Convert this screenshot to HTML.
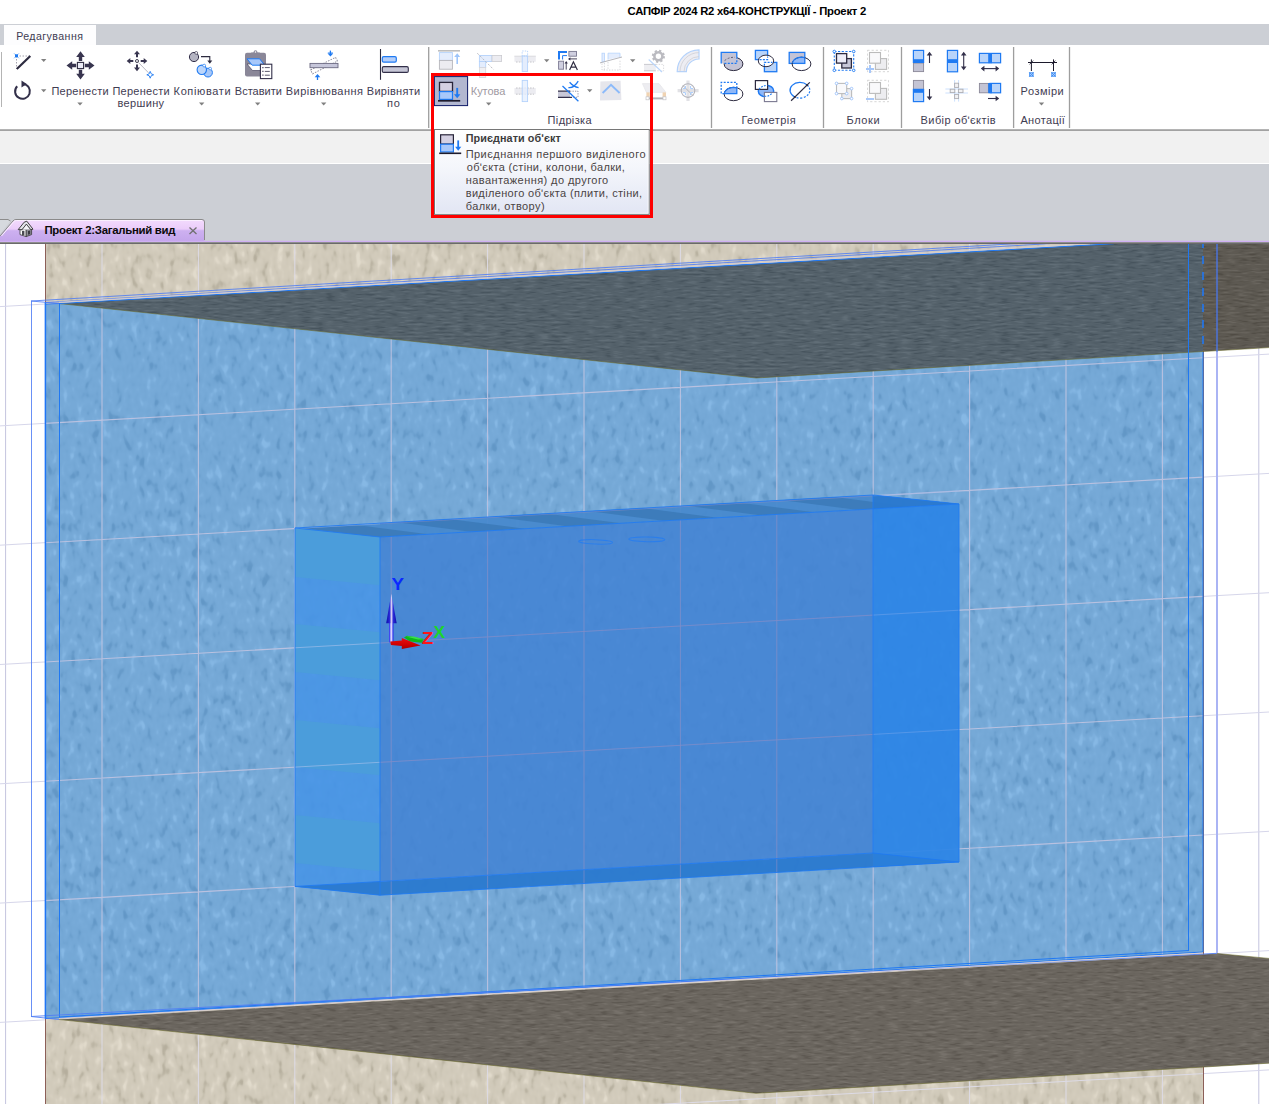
<!DOCTYPE html>
<html lang="uk">
<head>
<meta charset="utf-8">
<title>САПФІР 2024 R2 x64-КОНСТРУКЦІЇ - Проект 2</title>
<style>
html,body{margin:0;padding:0;}
body{width:1269px;height:1104px;overflow:hidden;position:relative;background:#fff;font-family:"Liberation Sans",sans-serif;font-size:11px;color:#3c3a4e;}
.abs{position:absolute;}
.t{position:absolute;white-space:nowrap;line-height:13px;font-size:11px;color:#3d3b50;}
.c{text-align:center;}
.b{font-weight:bold;}
.dd{position:absolute;width:0;height:0;border-left:3px solid transparent;border-right:3px solid transparent;border-top:3px solid #777;}
.sep{position:absolute;width:1px;background:#9c9c9c;}
svg{position:absolute;overflow:visible;}
</style>
</head>
<body>
<!-- title bar -->
<div class="abs" style="left:0;top:0;width:1269px;height:24px;background:#fff;"></div>
<!-- ribbon tab strip -->
<div class="abs" style="left:0;top:24px;width:1269px;height:21px;background:#cccfd5;"></div>
<div class="abs" style="left:4px;top:25px;width:92px;height:20px;background:#fdfdfe;"></div>
<!-- ribbon body -->
<div class="abs" style="left:0;top:45px;width:1269px;height:84px;background:#fff;"></div>
<div class="abs" style="left:0;top:129px;width:1269px;height:1px;background:#b4b4b4;"></div>
<div class="abs" style="left:0;top:130px;width:1269px;height:1px;background:#a2a2a2;"></div>
<div class="abs" style="left:0;top:131px;width:1269px;height:32px;background:#f1f1f1;"></div>
<div class="abs" style="left:0;top:163px;width:1269px;height:1px;background:#fff;"></div>
<div class="abs" style="left:0;top:164px;width:1269px;height:80px;background:#cccfd5;"></div>
<!-- document tab -->
<svg style="left:0;top:216px" width="1269" height="28" viewBox="0 216 1269 28">
<defs>
<linearGradient id="gTab" x1="0" y1="0" x2="0" y2="1">
<stop offset="0" stop-color="#f3dbfd"/><stop offset="0.42" stop-color="#ebcdfa"/><stop offset="0.5" stop-color="#cdb0f0"/><stop offset="1" stop-color="#c3a5eb"/>
</linearGradient>
</defs>
<!-- hidden previous tab stub -->
<path d="M0 219.5 H8 L10.5 221 L0 234 Z" fill="#d6d9de"/>
<path d="M0 219.5 H8 L10.5 221" stroke="#8c8c8c" stroke-width="1" fill="none"/>
<!-- active tab -->
<path d="M0 236 L13 221 Q14 219.5 16 219.5 H202 Q204.5 219.5 204.5 222 V242 H0 Z" fill="url(#gTab)"/>
<path d="M0 236 L13 221 Q14 219.5 16 219.5 H202 Q204.5 219.5 204.5 222 V240" stroke="#8a8a8a" stroke-width="1" fill="none"/>
<path d="M1.5 236 L14 221.5 Q15 220.5 16.5 220.5 H202" stroke="#fbf0ff" stroke-width="1" fill="none"/>
<rect x="0" y="240.8" width="1269" height="1.3" fill="#d0b0f4"/>
<rect x="0" y="242" width="1269" height="1" fill="#8e8e8e"/><rect x="0" y="243" width="1269" height="1" fill="#6a6a6a"/>
<!-- house icon -->
<g stroke-linejoin="round">
<path d="M20 229.4 V234.6 L26.2 236.6 V229.4 Z" fill="#fbfbfd" stroke="#3a3a3a" stroke-width="0.8"/>
<path d="M26.2 229.4 V236.6 L31.6 234.6 V229 Z" fill="#8e8e96" stroke="#3a3a3a" stroke-width="0.8"/>
<path d="M18.2 229.6 L24.2 222.2 L26.8 221.2 L33 229.2 L30.6 229.6 L26.4 224.2 L22 229.8 Z" fill="#e4e4ea" stroke="#2e2e2e" stroke-width="0.9"/>
<path d="M22 229.8 L26.4 224.2 L30.6 229.6" fill="#f4f4f8" stroke="#2e2e2e" stroke-width="0.7"/>
<rect x="22" y="230.8" width="2.4" height="4.4" fill="#4a4a52"/>
<path d="M28 231 l2.2 -0.4 v3.4 l-2.2 0.7 z" fill="#3a3a42"/>
</g>
<!-- close x -->
<path d="M189.5 227.5 L196.5 234 M196.5 227.5 L189.5 234" stroke="#707070" stroke-width="1.3" fill="none"/>
</svg>
<svg id="vp" style="left:0;top:244px;overflow:hidden" width="1269" height="860" viewBox="0 244 1269 860">
<defs>
<filter id="fWall" x="0" y="0" width="100%" height="100%" color-interpolation-filters="sRGB"><feTurbulence type="fractalNoise" baseFrequency="0.13 0.075" numOctaves="2" seed="7"/><feColorMatrix type="matrix" values="1 0 0 0 0  1 0 0 0 0  1 0 0 0 0  0 0 0 0 1"/><feComponentTransfer><feFuncR type="table" tableValues="0.386 0.386 0.386 0.386 0.390 0.403 0.424 0.443 0.454 0.459 0.462 0.465 0.469 0.477 0.494 0.513 0.526 0.526 0.526 0.526 0.526"/><feFuncG type="table" tableValues="0.593 0.593 0.593 0.593 0.597 0.608 0.628 0.646 0.655 0.660 0.663 0.665 0.669 0.677 0.693 0.710 0.722 0.722 0.722 0.722 0.722"/><feFuncB type="table" tableValues="0.778 0.778 0.778 0.778 0.782 0.792 0.810 0.827 0.836 0.840 0.843 0.845 0.849 0.856 0.870 0.886 0.897 0.897 0.897 0.897 0.897"/></feComponentTransfer></filter>
<filter id="fBeige" x="0" y="0" width="100%" height="100%" color-interpolation-filters="sRGB"><feTurbulence type="fractalNoise" baseFrequency="0.13 0.075" numOctaves="2" seed="3"/><feColorMatrix type="matrix" values="1 0 0 0 0  1 0 0 0 0  1 0 0 0 0  0 0 0 0 1"/><feComponentTransfer><feFuncR type="table" tableValues="0.711 0.711 0.711 0.711 0.720 0.741 0.771 0.796 0.810 0.818 0.822 0.825 0.830 0.841 0.856 0.873 0.886 0.886 0.886 0.886 0.886"/><feFuncG type="table" tableValues="0.684 0.684 0.684 0.684 0.693 0.714 0.744 0.770 0.783 0.791 0.795 0.798 0.803 0.814 0.829 0.846 0.859 0.859 0.859 0.859 0.859"/><feFuncB type="table" tableValues="0.617 0.617 0.617 0.617 0.626 0.648 0.679 0.706 0.721 0.729 0.733 0.737 0.742 0.753 0.769 0.787 0.800 0.800 0.800 0.800 0.800"/></feComponentTransfer></filter>
<filter id="fSlate" x="0" y="0" width="100%" height="100%" color-interpolation-filters="sRGB"><feTurbulence type="fractalNoise" baseFrequency="0.08 0.5" numOctaves="2" seed="11"/><feColorMatrix type="matrix" values="1 0 0 0 0  1 0 0 0 0  1 0 0 0 0  0 0 0 0 1"/><feComponentTransfer><feFuncR type="table" tableValues="0.278 0.278 0.278 0.278 0.278 0.283 0.295 0.311 0.322 0.329 0.333 0.337 0.344 0.355 0.367 0.377 0.383 0.383 0.383 0.383 0.383"/><feFuncG type="table" tableValues="0.329 0.329 0.329 0.329 0.329 0.334 0.346 0.362 0.373 0.380 0.384 0.388 0.395 0.406 0.418 0.428 0.434 0.434 0.434 0.434 0.434"/><feFuncB type="table" tableValues="0.365 0.365 0.365 0.365 0.365 0.370 0.382 0.398 0.409 0.416 0.420 0.424 0.431 0.442 0.454 0.464 0.470 0.470 0.470 0.470 0.470"/></feComponentTransfer></filter>
<filter id="fBrownT" x="0" y="0" width="100%" height="100%" color-interpolation-filters="sRGB"><feTurbulence type="fractalNoise" baseFrequency="0.08 0.5" numOctaves="2" seed="5"/><feColorMatrix type="matrix" values="1 0 0 0 0  1 0 0 0 0  1 0 0 0 0  0 0 0 0 1"/><feComponentTransfer><feFuncR type="table" tableValues="0.314 0.314 0.314 0.314 0.314 0.319 0.331 0.347 0.358 0.365 0.369 0.373 0.380 0.391 0.403 0.413 0.419 0.419 0.419 0.419 0.419"/><feFuncG type="table" tableValues="0.298 0.298 0.298 0.298 0.298 0.303 0.315 0.331 0.342 0.349 0.353 0.357 0.364 0.375 0.387 0.397 0.403 0.403 0.403 0.403 0.403"/><feFuncB type="table" tableValues="0.270 0.270 0.270 0.270 0.270 0.275 0.287 0.303 0.314 0.321 0.325 0.329 0.336 0.347 0.359 0.369 0.375 0.375 0.375 0.375 0.375"/></feComponentTransfer></filter>
<filter id="fBrown" x="0" y="0" width="100%" height="100%" color-interpolation-filters="sRGB"><feTurbulence type="fractalNoise" baseFrequency="0.08 0.5" numOctaves="2" seed="9"/><feColorMatrix type="matrix" values="1 0 0 0 0  1 0 0 0 0  1 0 0 0 0  0 0 0 0 1"/><feComponentTransfer><feFuncR type="table" tableValues="0.365 0.365 0.365 0.365 0.365 0.370 0.382 0.398 0.409 0.416 0.420 0.424 0.431 0.442 0.454 0.464 0.470 0.470 0.470 0.470 0.470"/><feFuncG type="table" tableValues="0.345 0.345 0.345 0.345 0.345 0.350 0.362 0.378 0.389 0.396 0.400 0.404 0.411 0.422 0.434 0.444 0.450 0.450 0.450 0.450 0.450"/><feFuncB type="table" tableValues="0.318 0.318 0.318 0.318 0.318 0.323 0.335 0.351 0.362 0.369 0.373 0.377 0.384 0.395 0.407 0.417 0.423 0.423 0.423 0.423 0.423"/></feComponentTransfer></filter>
<clipPath id="cWall"><polygon points="45,304.6 59,303.5 1114,243.7 1118,243 1203,243 1203,952 45,1018.6"/></clipPath>
<clipPath id="cDarkL"><polygon points="59,303.5 1114,243.7 1118,243 1203,243 1203,351.5 756,378"/></clipPath>
<clipPath id="cDarkR"><polygon points="1203,243 1269,243 1269,347.6 1203,351.5"/></clipPath>
<clipPath id="cBrown"><polygon points="59,1019.5 1217,953.5 1269,958.4 1269,1063.2 756,1093.3"/></clipPath>
</defs>
<rect x="0" y="244" width="1269" height="860" fill="#fff"/>
<path d="M5.6 244 V1104 M102 244 V1104 M198.4 244 V1104 M294.8 244 V1104 M391.2 244 V1104 M487.6 244 V1104 M584 244 V1104 M680.4 244 V1104 M776.8 244 V1104 M873.2 244 V1104 M969.6 244 V1104 M1066 244 V1104 M1162.4 244 V1104 M1258.8 244 V1104" stroke="#c4c4de" stroke-width="1" fill="none"/>
<path d="M0 187.3 L1269 115.5 M0 306.6 L1269 234.8 M0 425.9 L1269 354.1 M0 545.2 L1269 473.4 M0 664.5 L1269 592.7 M0 783.8 L1269 712 M0 903.1 L1269 831.3 M0 1022.4 L1269 950.6 M0 1141.7 L1269 1069.9" stroke="#d6d6ea" stroke-width="1" fill="none"/>
<rect x="45" y="244" width="1158" height="860" filter="url(#fBeige)"/>
<path d="M102 244 V1104 M198.4 244 V1104 M294.8 244 V1104 M391.2 244 V1104 M487.6 244 V1104 M584 244 V1104 M680.4 244 V1104 M776.8 244 V1104 M873.2 244 V1104 M969.6 244 V1104 M1066 244 V1104 M1162.4 244 V1104 M45 184.8 L1203 119.2 M45 1139.2 L1203 1073.6" stroke="#dddbe6" stroke-width="1" fill="none" clip-path="none"/>
<path d="M45.5 244 V1104 M1203.5 244 V1104" stroke="#8c5f58" stroke-width="1"/>
<g clip-path="url(#cWall)"><rect x="45" y="244" width="1158" height="780" filter="url(#fWall)"/>
<path d="M102 244 V1020 M198.4 244 V1020 M294.8 244 V1020 M391.2 244 V1020 M487.6 244 V1020 M584 244 V1020 M680.4 244 V1020 M776.8 244 V1020 M873.2 244 V1020 M969.6 244 V1020 M1066 244 V1020 M1162.4 244 V1020 M45 304.1 L1203 238.5 M45 423.4 L1203 357.8 M45 542.7 L1203 477.1 M45 662 L1203 596.4 M45 781.3 L1203 715.7 M45 900.6 L1203 835 M45 1019.9 L1203 954.3" stroke="#b9c1e0" stroke-width="1.1" fill="none"/>
</g>
<g clip-path="url(#cDarkL)"><rect x="45" y="244" width="1160" height="140" filter="url(#fSlate)"/></g>
<g clip-path="url(#cDarkR)"><rect x="1200" y="244" width="70" height="140" filter="url(#fBrownT)"/></g>
<g clip-path="url(#cBrown)"><rect x="45" y="945" width="1225" height="150" filter="url(#fBrown)"/></g>
<path d="M59 303.5 L756 378 L1269 347.6" stroke="#6a6a2a" stroke-width="0.8" fill="none" opacity="0.7"/>
<path d="M59 1019.5 L756 1093.3 L1269 1063.2 M1217 953.5 L1269 958.4" stroke="#6a6a2a" stroke-width="0.8" fill="none" opacity="0.7"/>
<clipPath id="cSide"><polygon points="295,528 380,537 380,895.2 295,886.4"/></clipPath>
<g clip-path="url(#cSide)">
<rect x="295" y="520" width="86" height="380" fill="#4794e6" fill-opacity="0.88"/>
<polygon points="295,528 380,536.3 380,585.3 295,577" fill="#4b9dda" fill-opacity="0.95"/>
<polygon points="295,624 380,632.3 380,680.3 295,672" fill="#4b9dda" fill-opacity="0.95"/>
<polygon points="295,720 380,728.3 380,775.3 295,767" fill="#4b9dda" fill-opacity="0.95"/>
<polygon points="295,815 380,823.3 380,871.3 295,863" fill="#4b9dda" fill-opacity="0.95"/>
</g>
<polygon points="295,528 873,495 959,504 380,537" fill="#4789cd" fill-opacity="0.94"/>
<clipPath id="cTop"><polygon points="295,528 873,495 959,504 380,537"/></clipPath>
<g clip-path="url(#cTop)" fill="#3c7bb9" fill-opacity="0.95">
<polygon points="198.6,532.5 252.6,529.4 337.6,540.4 283.6,543.5"/>
<polygon points="295,527 349,523.9 434,534.9 380,538"/>
<polygon points="391.4,521.5 445.4,518.4 530.4,529.4 476.4,532.5"/>
<polygon points="487.8,516 541.8,512.9 626.8,523.9 572.8,527"/>
<polygon points="584.2,510.5 638.2,507.4 723.2,518.4 669.2,521.5"/>
<polygon points="680.6,505 734.6,501.9 819.6,512.9 765.6,516"/>
<polygon points="777,499.5 831,496.4 916,507.4 862,510.5"/>
<polygon points="873.4,494 927.4,490.9 1012.4,502 958.4,505"/>
<polygon points="969.8,488.5 1023.8,485.4 1108.8,496.5 1054.8,499.5"/>
</g>
<polygon points="873,495 959,504 873,508.9" fill="#2a79cf" fill-opacity="0.95"/>
<polygon points="295,886.4 873,853 959,862 380,895.2" fill="#2a79cf" fill-opacity="0.95"/>
<polygon points="380,537 873,508.9 873,853 380,881.4" fill="#4383d3" fill-opacity="0.87"/>
<polygon points="873,508.9 959,504 959,862 873,867" fill="#2b84e6" fill-opacity="0.92"/>
<polygon points="873,853 959,862 873,867" fill="#2a79cf" fill-opacity="0.5"/>
<path d="M391.2 536.9 V894.1 M487.6 531.3 V888.5 M584 525.8 V883 M680.4 520.3 V877.5 M776.8 514.8 V872 M380 523.7 L873 495.8 M380 643 L873 615.1 M380 762.3 L873 734.4" stroke="#8a8cc4" stroke-width="1" fill="none" opacity="0.6"/>
<path d="M295 528.5 L380 523.7 M295 647.8 L380 643 M295 767.1 L380 762.3" stroke="#b4c4ec" stroke-width="1" fill="none" opacity="0.55"/>
<path d="M873 495.8 L959 490.9 M873 615.1 L959 610.2 M873 734.4 L959 729.5" stroke="#8cb0ec" stroke-width="1" fill="none" opacity="0.35"/>
<path d="M295 528 L873 495 L873 853 L295 886.4 Z M380 537 L959 504 L959 862 L380 895.2 Z M295 528 L380 537 M873 495 L959 504 M873 853 L959 862 M295 886.4 L380 895.2" stroke="#1f7af2" stroke-width="1" fill="none" stroke-opacity="0.85"/>
<ellipse cx="595.6" cy="541.9" rx="17" ry="2.2" transform="rotate(2 595.6 541.9)" stroke="#1f7af5" stroke-width="1" fill="none" opacity="0.7"/>
<ellipse cx="646.8" cy="539.4" rx="18" ry="2.3" transform="rotate(1 646.8 539.4)" stroke="#1f7af5" stroke-width="1" fill="none" opacity="0.7"/>
<path d="M45 304.3 L1114 243.7 M45 1018.6 L1203 952 M59 1017 L1189 950.5 M59.5 303.5 V1018 M1188.5 243 V951 M1203 352 V952" stroke="#1f78f3" stroke-width="1" fill="none"/>
<path d="M31 301 L1027 243 M45 302.6 L1060 243 M31 301 L59 303.5 M31 1016.5 L1217 953.3 M31 1016.5 L59 1019.5 M31.5 301 V1016.5" stroke="#4f7cf4" stroke-width="1" fill="none" opacity="0.85"/>
<path d="M45.4 302.5 V1018.6" stroke="#1f75f5" stroke-width="1.5" fill="none"/>
<path d="M1203 240 V352" stroke="#2177f2" stroke-width="1.6" stroke-dasharray="8 8" fill="none"/>
<path d="M1217 243 V953" stroke="#4a76e8" stroke-width="1.5" fill="none" opacity="0.9"/>
<path d="M1217 352 V953" stroke="#aab4f4" stroke-width="2" fill="none"/>
<path d="M59 302.4 L1090 243.6" stroke="#d4ccd0" stroke-width="1.2" fill="none" opacity="0.9"/>
<path d="M59 1018.4 L1203 953" stroke="#d8cfd8" stroke-width="1" fill="none" opacity="0.95"/>
<g>
<defs>
<linearGradient id="gCone" x1="0" y1="0" x2="1" y2="0"><stop offset="0" stop-color="#0c0ca8"/><stop offset="0.32" stop-color="#2a2ad8"/><stop offset="0.5" stop-color="#d8d0f4"/><stop offset="0.68" stop-color="#2a2ad8"/><stop offset="1" stop-color="#0c0ca8"/></linearGradient>
<linearGradient id="gShaft" x1="0" y1="0" x2="1" y2="0"><stop offset="0" stop-color="#1818f0"/><stop offset="0.5" stop-color="#f0ecff"/><stop offset="1" stop-color="#1818f0"/></linearGradient>
<linearGradient id="gRed" x1="0" y1="0" x2="0" y2="1"><stop offset="0" stop-color="#e81010"/><stop offset="0.6" stop-color="#d00000"/><stop offset="1" stop-color="#a80000"/></linearGradient>
</defs>
<polygon points="404,637.4 407,635.8 423.8,639 421.6,642.8 410,641.6" fill="#0cb81c"/>
<polygon points="406,636.6 414,636.4 423.8,639.2 418,639.6" fill="#38e048"/>
<rect x="389.1" y="622.5" width="4.3" height="20" fill="url(#gShaft)"/>
<polygon points="391.3,593.8 386.2,623.2 396.7,623.2" fill="url(#gCone)"/>
<polygon points="390.2,641.6 401.8,640.6 401.8,638.1 420.6,645.4 401.8,649 401.8,646 391,645" fill="url(#gRed)"/>
<text x="391.6" y="590" font-family="Liberation Sans, sans-serif" font-weight="bold" font-size="16.2" fill="#0a28ff" textLength="12.6" lengthAdjust="spacingAndGlyphs">Y</text>
<text x="421.8" y="643.7" font-family="Liberation Sans, sans-serif" font-weight="bold" font-size="16" fill="#ff1414" textLength="11.6" lengthAdjust="spacingAndGlyphs">Z</text>
<text x="433.6" y="637.7" font-family="Liberation Sans, sans-serif" font-weight="bold" font-size="16" fill="#1cd42c" textLength="11.6" lengthAdjust="spacingAndGlyphs">X</text>
</g>
</svg>
<!-- ribbon icons -->
<svg id="rib" style="left:0;top:45px" width="1269" height="85" viewBox="0 45 1269 85">
<defs>
<marker id="mD" viewBox="0 0 6 6" refX="3" refY="3" markerWidth="6" markerHeight="6" orient="auto"><path d="M0 0 L6 3 L0 6 Z" fill="#33304a"/></marker>
</defs>
<g fill="none" stroke-linecap="butt">
<!-- separators -->
<path d="M1.5 52 V107" stroke="#b4b4b4" stroke-width="1"/>
<path d="M428.7 47 V128 M711.5 47 V128 M823.5 47 V128 M901.5 47 V128 M1013.6 47 V128 M1069.5 47 V128" stroke="#9e9e9e" stroke-width="1.3"/>

<!-- line tool -->
<path d="M16.5 56 H30 M16.5 56 V69" stroke="#8a8898" stroke-width="0.8" stroke-dasharray="1.5 1.5"/>
<path d="M16.8 69 L30.3 56" stroke="#2d2b40" stroke-width="2.2"/>
<rect x="15" y="54.3" width="3" height="3" fill="#1f7af2"/>
<path d="M14 53.3 l5 5 m0 -5 l-5 5" stroke="#1f7af2" stroke-width="0.5"/>
<path d="M41 59 h5.4 l-2.7 3 z" fill="#808080"/>
<!-- rotate tool -->
<path d="M23.2 84 A7.4 7.4 0 1 1 17.2 86.2" stroke="#33304a" stroke-width="2"/>
<path d="M21.5 80.5 L26.8 84 L21.5 87.6 Z" fill="#33304a"/>
<path d="M41 89.2 h5.4 l-2.7 3 z" fill="#808080"/>

<!-- move icon -->
<g fill="#38354f">
<path d="M80.5 51.3 l4.3 5.7 h-2.6 v4 h-3.4 v-4 h-2.6 z"/>
<path d="M80.5 79.5 l4.3 -5.7 h-2.6 v-4 h-3.4 v4 h-2.6 z"/>
<path d="M66.5 65.5 l5.7 -4.3 v2.6 h4 v3.4 h-4 v2.6 z"/>
<path d="M94.5 65.5 l-5.7 -4.3 v2.6 h-4 v3.4 h4 v2.6 z"/>
</g>
<rect x="77.4" y="62.4" width="6.2" height="6.2" fill="#ececf6" stroke="#2d2b40" stroke-width="1.1"/>
<path d="M77.3 102.6 h5.4 l-2.7 3 z" fill="#808080"/>

<!-- move vertex icon -->
<g fill="#38354f">
<path d="M137 50.7 l3 3.6 h-2 v3 h-2 v-3 h-2 z"/>
<path d="M137 71.2 l3 -3.6 h-2 v-3 h-2 v3 h-2 z"/>
<path d="M126.7 61 l3.6 -3 v2 h3 v2 h-3 v2 z"/>
<path d="M147.3 61 l-3.6 -3 v2 h-3 v2 h3 v2 z"/>
</g>
<circle cx="137" cy="61" r="1.5" fill="#fff" stroke="#2d2b40" stroke-width="0.9"/>
<path d="M138.3 62.3 L148.5 72.8" stroke="#8a8898" stroke-width="0.6"/>
<path d="M150.2 71.4 l1 2.4 2.4 1 -2.4 1 -1 2.4 -1 -2.4 -2.4 -1 2.4 -1 z" fill="#fff" stroke="#1f7af2" stroke-width="0.9"/>

<!-- copy icon -->
<circle cx="194" cy="57" r="4.6" fill="#b4b4c2" stroke="#33304a" stroke-width="1"/>
<circle cx="196.2" cy="52.9" r="1.4" fill="#fff" stroke="#33304a" stroke-width="0.7"/>
<path d="M201 56.6 H209.8 V61" stroke="#2d2b40" stroke-width="1.1"/>
<path d="M207.3 60.4 h5 l-2.5 3.4 z" fill="#2d2b40"/>
<circle cx="208" cy="72.6" r="4.4" fill="#a8c8f8" stroke="#1f7af2" stroke-width="1"/>
<circle cx="210.2" cy="68.6" r="1.3" fill="#fff" stroke="#1f7af2" stroke-width="0.7"/>
<circle cx="201.8" cy="69.8" r="4.7" fill="#bcd6fb" stroke="#1f7af2" stroke-width="1.1"/>
<circle cx="204.2" cy="65.6" r="1.4" fill="#fff" stroke="#1f7af2" stroke-width="0.7"/>
<path d="M199 102.6 h5.4 l-2.7 3 z" fill="#808080"/>

<!-- paste icon -->
<rect x="245" y="52.8" width="21" height="23.8" rx="2" fill="#8a8798"/>
<path d="M250.8 55.4 v-2 q0 -1 1 -1 h1.6 q0.3 -2.2 2.1 -2.2 q1.8 0 2.1 2.2 h1.6 q1 0 1 1 v2 z" fill="#8a8798"/>
<circle cx="255.5" cy="52" r="0.8" fill="#fff"/>
<path d="M247 64 h12 l5.5 6.5 h-12 z" fill="#fff" stroke="#4a4760" stroke-width="0.7"/>
<path d="M247 58.8 h12.6 l5.2 6.4 h-12.6 z" fill="#a8c8fa" stroke="#1f7af2" stroke-width="1"/>
<rect x="260.4" y="64.2" width="11.4" height="14.4" fill="#fff" stroke="#33304a" stroke-width="1.1"/>
<path d="M264.8 67.6 h5 M264.8 71.4 h5 M264.8 75.2 h5" stroke="#4a4760" stroke-width="0.9"/>
<path d="M262.3 67.6 h1.2 M262.3 71.4 h1.2 M262.3 75.2 h1.2" stroke="#4a4760" stroke-width="1.2"/>
<path d="M255 102.6 h5.4 l-2.7 3 z" fill="#808080"/>

<!-- align icon -->
<rect x="310" y="63.4" width="28" height="4.3" fill="none" stroke="#8a8898" stroke-width="0.9" stroke-dasharray="1.6 1.2" transform="rotate(-27 324 65.5)"/>
<rect x="310" y="63.4" width="28" height="4.3" fill="#c6c6da" stroke="#6a6880" stroke-width="0.9"/>
<path d="M330.4 50.6 V55" stroke="#1f7af2" stroke-width="1.3"/>
<path d="M327.6 53.4 h5.6 l-2.8 3.2 z" fill="#1f7af2"/>
<path d="M327.8 53 H333" stroke="#1f7af2" stroke-width="0.9"/>
<path d="M317.5 80 V75.6" stroke="#1f7af2" stroke-width="1.3"/>
<path d="M314.7 77.2 h5.6 l-2.8 -3.2 z" fill="#1f7af2"/>
<path d="M321 102.6 h5.4 l-2.7 3 z" fill="#808080"/>

<!-- align-by icon -->
<path d="M380.5 49 V79.8" stroke="#2d2b40" stroke-width="1.1"/>
<rect x="382.3" y="56.6" width="14" height="5.6" rx="1.4" fill="#b4cffa" stroke="#1f7af2" stroke-width="1.2"/>
<rect x="382.3" y="66.6" width="26" height="5.8" rx="1.4" fill="#c6c6d6" stroke="#33304a" stroke-width="1.1"/>
</g>
</svg>
<svg id="rib2" style="left:0;top:45px" width="1269" height="85" viewBox="0 45 1269 85">
<g fill="none">
<!-- ===== Pidrizka row 1 (faded) ===== -->
<g opacity="0.55">
<!-- icon1 -->
<path d="M438 50.8 H460" stroke="#8a8a8a" stroke-width="1.6"/>
<rect x="439.4" y="52.6" width="13" height="7.8" fill="#cfe0fc" stroke="#78aef8" stroke-width="0.9"/>
<rect x="439.4" y="60.4" width="13" height="8.8" fill="#dedee6" stroke="#7a7a84" stroke-width="0.9"/>
<path d="M457.2 64 V55.5" stroke="#4f97f7" stroke-width="1.6"/>
<path d="M454.2 57 l3 -3.8 3 3.8 z" fill="#4f97f7"/>
<!-- icon2 corner -->
<rect x="479.4" y="55.5" width="12.6" height="6" fill="#cfe0fc" stroke="#78aef8" stroke-width="0.9"/>
<rect x="492" y="55.5" width="9.6" height="6" fill="#dedee6" stroke="#a0a0aa" stroke-width="0.8"/>
<rect x="479.4" y="61.5" width="6.3" height="6" fill="#cfe0fc" stroke="#78aef8" stroke-width="0.9"/>
<rect x="479.4" y="67.5" width="6.3" height="10" fill="#e4e4ea" stroke="#b4b4bc" stroke-width="0.8"/>
<path d="M477.3 53.2 L493.7 69.6" stroke="#7a7a84" stroke-width="0.9" stroke-dasharray="2.2 1.6"/>
<!-- icon3 cross -->
<rect x="514.4" y="56.2" width="21.4" height="5.6" fill="#dedee6" stroke="none"/>
<path d="M514.4 56.2 H535.8" stroke="#b0b0b8" stroke-width="0.8"/>
<path d="M516 62 H534" stroke="#8a8a94" stroke-width="0.9" stroke-dasharray="1.6 1.2"/>
<rect x="522.2" y="56" width="5.4" height="15.4" fill="#cfe0fc" stroke="#78aef8" stroke-width="0.9"/>
<rect x="522.2" y="51" width="5.4" height="5" fill="none" stroke="#78aef8" stroke-width="0.9" stroke-dasharray="1.4 1.2"/>
</g>
<path d="M544 59.2 h5.4 l-2.7 3 z" fill="#808080"/>
<!-- icon4 A -->
<path d="M559 59.5 V52 H567" stroke="#1f7af2" stroke-width="2"/>
<path d="M562.6 59.5 V55.6 H567" stroke="#1f7af2" stroke-width="1"/>
<rect x="568.9" y="51.4" width="7.6" height="4.8" fill="#d0d0e0" stroke="#7a7890" stroke-width="0.9"/>
<path d="M577 58.9 H569.5" stroke="#33304a" stroke-width="0.9"/>
<path d="M570.4 57.3 l-2.4 1.6 2.4 1.6 z" fill="#33304a"/>
<rect x="558.6" y="61.2" width="5" height="8" fill="#d0d0e0" stroke="#7a7890" stroke-width="0.9"/>
<path d="M566.2 69.6 V62.4" stroke="#33304a" stroke-width="0.9"/>
<path d="M564.6 63.4 l1.6 -2.4 1.6 2.4 z" fill="#33304a"/>
<path d="M569.6 70 L573.4 61.8 L577.4 70 M571 67.2 H575.8" stroke="#2d2b40" stroke-width="1.2"/>
<!-- icon5 faded -->
<g opacity="0.55">
<rect x="602" y="53.2" width="2.4" height="8.6" fill="#cfe0fc" stroke="#78aef8" stroke-width="0.8"/>
<path d="M608 59.6 V53.2 H620 V57.2" fill="#cfe0fc" stroke="#78aef8" stroke-width="0.8"/>
<path d="M600 62.9 L622 57" stroke="#7a7a84" stroke-width="1"/>
<path d="M602 63.5 V70 H620 V60 M604.4 63 V70 M608 62 V70" stroke="#9a9aa4" stroke-width="0.7" stroke-dasharray="1.4 1.3"/>
</g>
<path d="M630 59.2 h5.4 l-2.7 3 z" fill="#808080"/>
<!-- icon6 gear faded -->
<g opacity="0.5">
<circle cx="658.4" cy="56.3" r="4" stroke="#7a7a84" stroke-width="2.6"/>
<circle cx="658.4" cy="56.3" r="5.6" stroke="#7a7a84" stroke-width="2" stroke-dasharray="2.2 2.2"/>
<rect x="644" y="64.4" width="11.8" height="6.4" fill="#dedee6" stroke="none"/>
<path d="M644 64.4 H655.8 M644 70.8 H655.8" stroke="#8a8a94" stroke-width="0.9"/>
<path d="M656 64.4 H663.6 V70.8 H656" stroke="#9a9aa4" stroke-width="0.7" stroke-dasharray="1.4 1.3"/>
<path d="M648.7 59.5 L662 72" stroke="#78aef8" stroke-width="1.1"/>
</g>
<!-- icon7 arc faded -->
<g opacity="0.55">
<path d="M677.2 71.6 A21.8 21.8 0 0 1 699 49.8 V59 A12.6 12.6 0 0 0 686.4 71.6 Z" fill="#e0e0ea" stroke="#78aef8" stroke-width="1.2"/>
<path d="M680 71.6 A19 19 0 0 1 699 52.6 M684 71.6 A15 15 0 0 1 699 56.6" stroke="#a8a8b4" stroke-width="0.8"/>
</g>

<!-- ===== row 2 ===== -->
<rect x="434.4" y="76.6" width="33.2" height="29" fill="#b2b7d0" stroke="#0e1a68" stroke-width="1"/>
<rect x="439.5" y="82.4" width="13" height="9" fill="#d4d0e2" stroke="#28253a" stroke-width="1.3"/>
<rect x="439.5" y="91.6" width="13" height="7.8" fill="#a8c8fa" stroke="#1f7af2" stroke-width="1.2"/>
<path d="M438 100.8 H460.2" stroke="#1c1a2c" stroke-width="1.7"/>
<path d="M457.2 87.9 V95.4" stroke="#1f7af2" stroke-width="1.9"/>
<path d="M454 94.2 h6.4 l-3.2 4 z" fill="#1f7af2"/>
<path d="M486 102.6 h5.4 l-2.7 3 z" fill="#808080"/>
<!-- cross faded row2 -->
<g opacity="0.55">
<rect x="514.4" y="88" width="21.4" height="6.2" fill="#dedee6"/>
<path d="M516 88 H534 M516 94.2 H534" stroke="#8a8a94" stroke-width="0.9" stroke-dasharray="1.6 1.2"/>
<rect x="522.2" y="80.4" width="5.4" height="21.2" fill="#cfe0fc" fill-opacity="0.8" stroke="#78aef8" stroke-width="0.9"/>
</g>
<!-- trim icon -->
<rect x="558" y="91.4" width="12" height="5.6" fill="#c8c8d8"/>
<path d="M558 91.2 H570 M558 97.3 H572" stroke="#33304a" stroke-width="1.2"/>
<path d="M570 91.2 H578 V97.3 H572" stroke="#6a6880" stroke-width="0.7" stroke-dasharray="1.3 1.2"/>
<path d="M562.5 86 L578.4 101.2" stroke="#1f7af2" stroke-width="1.3"/>
<path d="M568.4 87.6 Q574 88.4 578.2 81.2 M569.6 82.2 Q573.6 86.8 578.6 87.6" stroke="#1f7af2" stroke-width="1.3"/>
<path d="M587 89.2 h5.4 l-2.7 3 z" fill="#808080"/>
<!-- chevron icon -->
<path d="M600.4 81.6 L620.6 80.8 L621.4 100 L600 100.6 Z" fill="#e6e6ec"/>
<path d="M602.6 93 L611 84.8 L619.6 93" stroke="#8cbafa" stroke-width="1.9"/>
<!-- trapezoid faded -->
<g opacity="0.5">
<path d="M642.4 83.6 H659 L666 92.4 H646.4 Z" fill="#dcdce4" stroke="#c4c4cc" stroke-width="0.6"/>
<rect x="646.4" y="92.4" width="3.4" height="5" fill="#e2a868"/>
<rect x="662.6" y="92.4" width="3.4" height="5" fill="#e2a868"/>
<path d="M646.4 98.4 H666" stroke="#6a6a74" stroke-width="2"/>
<rect x="646" y="96.8" width="3" height="3" fill="#fff" stroke="#8a8a94" stroke-width="0.7"/>
<rect x="663" y="96.8" width="3" height="3" fill="#fff" stroke="#8a8a94" stroke-width="0.7"/>
</g>
<!-- crosshair faded -->
<g opacity="0.5">
<path d="M688 80.4 V101 M677.6 90.6 H698.6" stroke="#c4c4cc" stroke-width="3.2"/>
<circle cx="688" cy="90.6" r="6.8" stroke="#6a6a78" stroke-width="1.1"/>
<path d="M683 85.6 L693 95.6" stroke="#6a6a78" stroke-width="1"/>
<path d="M685.4 86 V88.6 H683 M690.6 86 V88.6 H693 M685.4 95.2 V92.6 H683 M690.6 95.2 V92.6 H693" stroke="#4f97f7" stroke-width="1"/>
</g>
</g>
</svg>
<svg id="rib3" style="left:0;top:45px" width="1269" height="85" viewBox="0 45 1269 85">
<defs>
<clipPath id="cG3"><rect x="789.2" y="52.4" width="15.6" height="11"/></clipPath>
<clipPath id="cG4"><rect x="721.2" y="82.4" width="15.6" height="11.3"/></clipPath>
</defs>
<g fill="none">
<!-- G1 -->
<ellipse cx="733.5" cy="63.9" rx="9.4" ry="6.7" fill="#c4c4d6" stroke="#2d2b40" stroke-width="1"/>
<path d="M721.2 52.4 H736.8 V63.4 H721.2 Z" fill="#c4c4d6"/>
<path d="M721.2 63.6 V52.4 H736.8 V57.8" stroke="#1f7af2" stroke-width="1.3"/>
<path d="M724.4 63.4 H736.8 V58" stroke="#1f7af2" stroke-width="1.3" stroke-dasharray="2 1.4"/>
<path d="M724.6 60.6 Q729 57 735 57.3" stroke="#55536a" stroke-width="0.9" stroke-dasharray="2 1.6"/>
<!-- G2 -->
<rect x="755.4" y="50.4" width="12.2" height="9.2" fill="#b8d4fa" stroke="#1f7af2" stroke-width="1.3"/>
<rect x="764.4" y="62.4" width="12.4" height="9.3" fill="#b8d4fa" stroke="#1f7af2" stroke-width="1.3"/>
<ellipse cx="766" cy="60.9" rx="7.7" ry="5.8" fill="#fff" stroke="#2d2b40" stroke-width="1"/>
<path d="M759.6 59.6 H767.6 V56.4 M764.4 65.8 V62.4 H772.4" stroke="#1f7af2" stroke-width="1.2" stroke-dasharray="2 1.3"/>
<!-- G3 -->
<rect x="789.2" y="52.4" width="15.6" height="11" fill="#c4c4d6"/>
<ellipse cx="801.5" cy="63.9" rx="9.4" ry="6.7" fill="#8fb8f8" clip-path="url(#cG3)"/>
<rect x="789.2" y="52.4" width="15.6" height="11" stroke="#1f7af2" stroke-width="1.3"/>
<ellipse cx="801.5" cy="63.9" rx="9.4" ry="6.7" stroke="#2d2b40" stroke-width="1"/>
<path d="M792.4 62.8 Q794 57.6 801.5 57.2 Q803.6 57.2 804.8 57.6" stroke="#1f7af2" stroke-width="1.2"/>
<!-- G4 -->
<ellipse cx="733.5" cy="94" rx="9.4" ry="6.7" fill="#8fb8f8" clip-path="url(#cG4)"/>
<ellipse cx="733.5" cy="94" rx="9.4" ry="6.7" stroke="#2d2b40" stroke-width="1"/>
<path d="M724.4 93.7 H736.8 V87.8" stroke="#1f7af2" stroke-width="1.3"/>
<path d="M724.3 93 Q726 87.8 733.5 87.3 Q735.6 87.3 736.8 87.7" stroke="#1f7af2" stroke-width="1.2"/>
<path d="M724.4 93.7 H721.2 V82.4 H736.8 V87.6" stroke="#1f7af2" stroke-width="1.3" stroke-dasharray="2 1.4"/>
<!-- G5 -->
<ellipse cx="766" cy="91" rx="7.7" ry="5.8" fill="#8fb8f8" stroke="#1f7af2" stroke-width="1.5"/>
<rect x="755.4" y="80.6" width="12.2" height="8.8" fill="#fff" stroke="#2d2b40" stroke-width="1.2"/>
<rect x="764.4" y="92.4" width="12.4" height="9.2" fill="#fff" stroke="#7a7890" stroke-width="1.1"/>
<path d="M759 89.4 Q762 85.4 767.6 85.3 M764.4 96.2 Q769 97 772.6 92.6" stroke="#1f7af2" stroke-width="1.1" stroke-dasharray="1.8 1.3"/>
<!-- G6 -->
<path d="M807.2 85 A9.9 7.8 0 1 0 794.9 97" stroke="#1f7af2" stroke-width="1.2"/>
<path d="M807.2 85 A9.9 7.8 0 0 1 794.9 97" stroke="#1f7af2" stroke-width="1.2" stroke-dasharray="2 1.5"/>
<path d="M791.1 100.8 L809.8 82.4" stroke="#2d2b40" stroke-width="1.2"/>
<circle cx="794.9" cy="97" r="1.1" fill="#2d2b40"/><circle cx="807" cy="85.2" r="1.1" fill="#2d2b40"/>

<!-- B1 -->
<rect x="841.8" y="58.6" width="9.6" height="9.4" fill="#c8c8d8" stroke="#2d2b40" stroke-width="1.3"/>
<rect x="836.5" y="53.6" width="10.2" height="9.5" fill="#eeeef8" stroke="#2d2b40" stroke-width="1.3"/>
<rect x="834.3" y="51.5" width="19.4" height="18.8" stroke="#1f7af2" stroke-width="1.1" stroke-dasharray="2.2 1.5"/>
<g fill="#fff" stroke="#1f7af2" stroke-width="0.9"><circle cx="834.3" cy="51.5" r="1.3"/><circle cx="853.7" cy="51.5" r="1.3"/><circle cx="834.3" cy="70.3" r="1.3"/><circle cx="853.7" cy="70.3" r="1.3"/></g>
<!-- B2 faded -->
<g opacity="0.5">
<rect x="867.4" y="50.3" width="21.2" height="21.4" stroke="#8a8a8a" stroke-width="0.7" stroke-dasharray="2.2 2"/>
<rect x="875.4" y="58.6" width="11.2" height="10.8" fill="#dcdce2" stroke="#7a7a7a" stroke-width="1.1"/>
<rect x="869.5" y="52.5" width="11" height="10.7" fill="#f4f4f8" stroke="#7a7a7a" stroke-width="1.1"/>
</g>
<path d="M870 65 V73 M866 69 H874" stroke="#a4c6fa" stroke-width="1.9"/>
<!-- B3 faded -->
<g opacity="0.5">
<rect x="841.8" y="88.6" width="9.8" height="10" fill="#dcdce2" stroke="#7a7a7a" stroke-width="1.1"/>
<rect x="836.5" y="83.4" width="10.2" height="10.2" fill="#f4f4f8" stroke="#7a7a7a" stroke-width="1.1"/>
</g>
<g fill="#fff" stroke="#9cc2fa" stroke-width="0.9"><circle cx="836.5" cy="83.4" r="1.3"/><circle cx="846.7" cy="83.4" r="1.3"/><circle cx="836.5" cy="93.6" r="1.3"/><circle cx="846.7" cy="93.6" r="1.3"/><circle cx="851.6" cy="88.6" r="1.3"/><circle cx="851.6" cy="98.6" r="1.3"/><circle cx="841.8" cy="98.6" r="1.3"/></g>
<!-- B4 faded -->
<g opacity="0.5">
<rect x="867.4" y="80.3" width="21.2" height="21.4" stroke="#8a8a8a" stroke-width="0.7" stroke-dasharray="2.2 2"/>
<rect x="875.4" y="88.4" width="11.2" height="10.9" fill="#dcdce2" stroke="#7a7a7a" stroke-width="1.1"/>
<rect x="869.5" y="82.5" width="11" height="10.9" fill="#f4f4f8" stroke="#7a7a7a" stroke-width="1.1"/>
</g>
<path d="M866 99 H874" stroke="#a4c6fa" stroke-width="1.9"/>

<!-- S1 -->
<rect x="913.4" y="63" width="10.2" height="8.6" fill="#c4c4d4" stroke="#8a8898" stroke-width="0.9"/>
<rect x="913.4" y="50.4" width="10.2" height="12" fill="#b8d4fa" stroke="#1f7af2" stroke-width="1.2"/>
<rect x="913" y="59.2" width="11" height="3.8" fill="#1f7af2"/>
<path d="M929.5 63 V54" stroke="#33304a" stroke-width="1.1"/><path d="M926.7 55.4 L929.5 51.8 L932.3 55.4 Z" fill="#33304a"/>
<!-- S2 -->
<rect x="947.4" y="50.4" width="10.2" height="21.4" fill="#b8d4fa" stroke="#1f7af2" stroke-width="1.2"/>
<rect x="947" y="59.2" width="11" height="3.8" fill="#1f7af2"/>
<path d="M963.7 54 V68" stroke="#33304a" stroke-width="1.1"/><path d="M960.9 55.4 L963.7 51.8 L966.5 55.4 Z M960.9 66.6 L963.7 70.2 L966.5 66.6 Z" fill="#33304a"/>
<!-- S3 -->
<rect x="979.4" y="53.4" width="21.2" height="9.4" fill="#b8d4fa" stroke="#1f7af2" stroke-width="1.2"/>
<rect x="988.2" y="53" width="3.8" height="10.2" fill="#1f7af2"/>
<path d="M983 68.6 H997" stroke="#33304a" stroke-width="1.1"/><path d="M984.4 65.8 L980.8 68.6 L984.4 71.4 Z M995.6 65.8 L999.2 68.6 L995.6 71.4 Z" fill="#33304a"/>
<!-- S4 -->
<rect x="913.4" y="80.4" width="10.2" height="9" fill="#c4c4d4" stroke="#8a8898" stroke-width="0.9"/>
<rect x="913.4" y="89.4" width="10.2" height="12.2" fill="#b8d4fa" stroke="#1f7af2" stroke-width="1.2"/>
<rect x="913" y="89" width="11" height="3.8" fill="#1f7af2"/>
<path d="M929.5 89 V98" stroke="#33304a" stroke-width="1.1"/><path d="M926.7 96.6 L929.5 100.2 L932.3 96.6 Z" fill="#33304a"/>
<!-- S5 faded -->
<g opacity="0.55">
<path d="M954.6 80 V101.6 M958.6 80 V101.6 M945.4 89 H968 M945.4 93 H968" stroke="#8cbafa" stroke-width="0.8"/>
<rect x="954.6" y="83.2" width="4" height="4.2" fill="#e6e6ea" stroke="#6a6a74" stroke-width="0.9"/>
<rect x="954.6" y="94.4" width="4" height="4.2" fill="#e6e6ea" stroke="#6a6a74" stroke-width="0.9"/>
<rect x="950.2" y="89.2" width="4.6" height="3.4" fill="#e6e6ea" stroke="#6a6a74" stroke-width="0.9"/>
<rect x="958.4" y="89.2" width="4.6" height="3.4" fill="#e6e6ea" stroke="#6a6a74" stroke-width="0.9"/>
</g>
<!-- S6 -->
<rect x="979.4" y="83.4" width="9" height="9.4" fill="#c4c4d4" stroke="#8a8898" stroke-width="0.9"/>
<rect x="990" y="83.4" width="10.6" height="9.4" fill="#b8d4fa" stroke="#1f7af2" stroke-width="1.2"/>
<rect x="988.2" y="83" width="3.8" height="10.2" fill="#1f7af2"/>
<path d="M988 98.5 H997" stroke="#33304a" stroke-width="1.1"/><path d="M995.6 95.7 L999.2 98.5 L995.6 101.3 Z" fill="#33304a"/>

<!-- dimensions icon -->
<path d="M1028 62.5 H1057 M1031.4 59.4 V71 M1053.5 59.4 V71" stroke="#1c1a2c" stroke-width="1"/>
<path d="M1029.6 64.4 L1033.2 60.6 M1051.7 64.4 L1055.3 60.6" stroke="#1c1a2c" stroke-width="0.8"/>
<rect x="1029.8" y="72.9" width="3.2" height="3.2" fill="#fff" stroke="#1f7af2" stroke-width="1"/>
<rect x="1051.9" y="72.9" width="3.2" height="3.2" fill="#fff" stroke="#1f7af2" stroke-width="1"/>
<path d="M1029 72.1 l4.8 4.8 m0 -4.8 l-4.8 4.8 M1051.1 72.1 l4.8 4.8 m0 -4.8 l-4.8 4.8" stroke="#1f7af2" stroke-width="0.6"/>
<path d="M1038.8 102.4 h5.4 l-2.7 3 z" fill="#808080"/>
</g>
</svg>
<!-- tooltip -->
<svg style="left:430px;top:126px" width="226" height="94" viewBox="430 126 226 94">
<defs><linearGradient id="gTip" x1="0" y1="0" x2="0" y2="1"><stop offset="0" stop-color="#ffffff"/><stop offset="0.45" stop-color="#f4f6fb"/><stop offset="1" stop-color="#e2e6f4"/></linearGradient></defs>
<rect x="434.5" y="129.5" width="214.6" height="84.8" fill="url(#gTip)" stroke="#767676" stroke-width="1"/>
<rect x="435.5" y="130.5" width="212.6" height="82.8" fill="none" stroke="#ffffff" stroke-width="1" opacity="0.7"/>
<rect x="440.6" y="134.8" width="12.8" height="9.2" fill="#d4d0e2" stroke="#28253a" stroke-width="1.2"/>
<rect x="440.6" y="144.2" width="12.8" height="7.8" fill="#a8c8fa" stroke="#1f7af2" stroke-width="1.2"/>
<path d="M439.2 153.3 H461.2" stroke="#1c1a2c" stroke-width="1.6"/>
<path d="M458.2 140.4 V148" stroke="#1f7af2" stroke-width="1.8"/>
<path d="M455.1 146.8 h6.2 l-3.1 4 z" fill="#1f7af2"/>
</svg>
<!-- red highlight rectangle -->
<div class="abs" style="left:431px;top:73px;width:222px;height:145px;box-sizing:border-box;border:3px solid #fe0000;"></div>
<!-- labels -->
<div class="t" id="title" style="left:627.60px;top:5.0px;font-size:11.3px;font-weight:bold;color:#000;letter-spacing:-0.265px;">САПФІР 2024 R2 x64-КОНСТРУКЦІЇ - Проект 2</div>
<div class="t" id="tabtxt" style="left:16.20px;top:29.5px;font-size:10.6px;font-weight:normal;color:#403c52;letter-spacing:0.440px;">Редагування</div>
<div class="t" id="l1" style="left:51.40px;top:84.5px;font-size:11px;font-weight:normal;color:#3f3c52;letter-spacing:0.275px;">Перенести</div>
<div class="t" id="l2a" style="left:112.40px;top:84.5px;font-size:11px;font-weight:normal;color:#3f3c52;letter-spacing:0.275px;">Перенести</div>
<div class="t" id="l2b" style="left:117.40px;top:97.3px;font-size:11px;font-weight:normal;color:#3f3c52;letter-spacing:0.367px;">вершину</div>
<div class="t" id="l3" style="left:173.60px;top:84.5px;font-size:11px;font-weight:normal;color:#3f3c52;letter-spacing:0.625px;">Копіювати</div>
<div class="t" id="l4" style="left:234.80px;top:84.5px;font-size:11px;font-weight:normal;color:#3f3c52;letter-spacing:0.000px;">Вставити</div>
<div class="t" id="l5" style="left:285.80px;top:84.5px;font-size:11px;font-weight:normal;color:#3f3c52;letter-spacing:0.455px;">Вирівнювання</div>
<div class="t" id="l6a" style="left:366.80px;top:84.5px;font-size:11px;font-weight:normal;color:#3f3c52;letter-spacing:0.275px;">Вирівняти</div>
<div class="t" id="l6b" style="left:387.00px;top:97.3px;font-size:11px;font-weight:normal;color:#3f3c52;letter-spacing:0.800px;">по</div>
<div class="t" id="l7" style="left:470.80px;top:84.5px;font-size:11px;font-weight:normal;color:#a09aa2;letter-spacing:-0.040px;">Кутова</div>
<div class="t" id="g1" style="left:547.60px;top:113.6px;font-size:11px;font-weight:normal;color:#3f3c52;letter-spacing:0.343px;">Підрізка</div>
<div class="t" id="g2" style="left:741.40px;top:113.6px;font-size:11px;font-weight:normal;color:#3f3c52;letter-spacing:0.500px;">Геометрія</div>
<div class="t" id="g3" style="left:846.40px;top:113.6px;font-size:11px;font-weight:normal;color:#3f3c52;letter-spacing:0.650px;">Блоки</div>
<div class="t" id="g4" style="left:920.60px;top:113.6px;font-size:11px;font-weight:normal;color:#3f3c52;letter-spacing:0.400px;">Вибір обʹєктів</div>
<div class="t" id="l8" style="left:1020.60px;top:84.5px;font-size:11px;font-weight:normal;color:#3f3c52;letter-spacing:0.500px;">Розміри</div>
<div class="t" id="g5" style="left:1020.40px;top:113.6px;font-size:11px;font-weight:normal;color:#3f3c52;letter-spacing:0.343px;">Анотації</div>
<div class="t" id="doctxt" style="left:44.40px;top:223.7px;font-size:11.4px;font-weight:bold;color:#0a0a0a;letter-spacing:-0.286px;">Проект 2:Загальний вид</div>
<div class="t" id="tt0" style="left:465.70px;top:131.8px;font-size:10.8px;font-weight:bold;color:#3c3c3c;letter-spacing:0.087px;">Приєднати обʹєкт</div>
<div class="t" id="tt1" style="left:465.70px;top:148.1px;font-size:11px;font-weight:normal;color:#4a4444;letter-spacing:0.454px;">Приєднання першого виділеного</div>
<div class="t" id="tt2" style="left:466.70px;top:161.0px;font-size:11px;font-weight:normal;color:#4a4444;letter-spacing:0.331px;">обʹєкта (стіни, колони, балки,</div>
<div class="t" id="tt3" style="left:465.70px;top:174.1px;font-size:11px;font-weight:normal;color:#4a4444;letter-spacing:0.426px;">навантаження) до другого</div>
<div class="t" id="tt4" style="left:465.70px;top:187.0px;font-size:11px;font-weight:normal;color:#4a4444;letter-spacing:0.344px;">виділеного обʹєкта (плити, стіни,</div>
<div class="t" id="tt5" style="left:465.70px;top:200.3px;font-size:11px;font-weight:normal;color:#4a4444;letter-spacing:0.408px;">балки, отвору)</div>
</body>
</html>
